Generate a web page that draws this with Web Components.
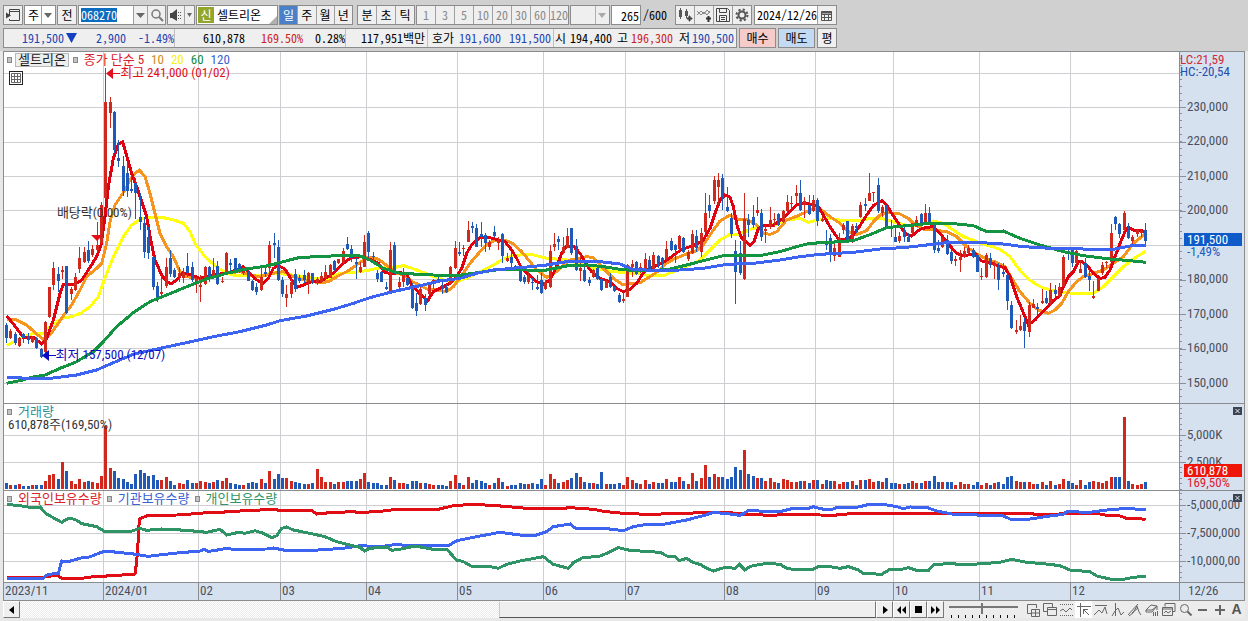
<!DOCTYPE html>
<html lang="ko">
<head>
<meta charset="utf-8">
<meta name="viewport" content="width=device-width, initial-scale=1">
<title>셀트리온 차트</title>
<style>
  html, body { margin: 0; }
  body {
    background: #e8e8e8;
    color: #000;
    font: 12px/18px "Noto Sans Mono CJK KR", "Noto Sans CJK KR", sans-serif;
    --chart-font: "Roboto Condensed", "Noto Sans Mono CJK KR", "Noto Sans CJK KR", sans-serif;
    --axis-bg: #d6e1ef;
    --axis-width: 65px;
    --line: #8a8c90;
  }
</style>
</head>
<body>
<chart-app></chart-app>

<script>
const define = (name, html, setup) => {
  const tpl = document.createElement('template');
  tpl.innerHTML = html;
  customElements.define(name, class extends HTMLElement {
    constructor() {
      super();
      this.attachShadow({ mode: 'open' }).append(tpl.content.cloneNode(true));
    }
    connectedCallback() { if (setup) setup.call(this, this.shadowRoot); }
  });
};

/* ---------- series, three units per pixel ---------- */
const FIRST = 19.5, STEP = 12.945;

/* colour, high, open/close top, open/close bottom, low */
const CANDLES = `b698,705,745,758 r716,723,745,748 b725,733,760,765 r740,745,768,770 b728,733,745,758 b730,737,750,762 r738,742,755,758 b742,745,775,777 b775,777,800,803 r692,697,785,790
r590,592,680,685 r517,535,585,600 b532,552,573,607 r527,540,546,567 b527,529,670,672 r590,598,612,630 r550,562,600,602 r472,504,537,550 r470,487,517,520 b452,480,512,520
r465,478,495,500 r395,465,480,485 r335,345,460,462 r-65,37,325,328 r22,37,68,115 b62,67,180,190 b150,205,213,230 b197,228,303,317 b220,250,302,322 b255,297,302,310
b265,280,310,388 b310,382,395,420 b380,400,485,505 b410,442,490,507 b497,500,590,600 b575,588,625,635 r555,606,611,625 r505,532,587,595 b480,505,553,560 b535,540,562,565
r530,548,560,575 r535,550,565,580 b488,528,550,560 b515,530,570,575 r560,565,575,610 r555,585,592,635 r527,530,583,585 b528,530,560,575 r505,540,560,563 b512,528,583,585
r560,573,577,580 r485,490,553,555 b508,520,526,545 b503,505,540,542 b520,523,545,550 r530,533,548,555 b543,545,572,574 b570,573,600,602 b580,590,605,615 r525,560,600,603
b525,545,551,560 r452,465,535,548 b430,460,465,503 b450,470,570,573 b560,570,612,620 r585,612,625,650 r560,575,613,625 b537,552,597,605 b555,563,573,578 b540,555,570,580
r545,550,577,613 b548,550,580,583 r560,567,577,585 r545,557,575,578 r525,545,565,568 r522,525,563,565 b510,513,540,543 r506,508,518,522 r475,483,515,522 b440,462,477,480
b465,478,505,515 b505,516,522,567 r515,530,545,550 r435,455,530,532 b422,430,485,500 b485,497,502,510 b540,550,567,575 b543,545,575,577 b575,590,597,600 r455,480,607,610
b455,465,550,552 r560,575,592,605 r535,545,575,590 b560,565,585,588 b580,585,653,656 b610,640,663,677 r585,597,643,645 b612,623,645,662 r578,583,613,616 r568,570,582,597
b558,567,573,580 b577,585,597,612 b585,592,605,608 r528,530,583,585 r453,473,533,537 b457,486,491,497 r465,473,478,497 r393,420,455,457 b397,408,415,430 b402,413,470,472
b395,432,440,470 b430,435,460,485 r450,455,472,480 b407,425,437,440 r440,450,460,480 b430,432,497,520 r490,503,512,515 b487,500,520,530 b525,528,535,540 b530,533,573,576
b555,560,575,583 r545,558,575,583 b565,575,580,600 b555,592,597,600 b548,570,608,612 r570,577,598,600 r465,482,592,595 r430,462,472,483 b437,447,455,480 r440,470,490,492
r413,437,473,475 b413,415,490,495 b447,468,540,543 r495,535,542,572 b510,540,573,575 b560,570,578,587 r537,540,562,565 b530,535,567,570 b565,568,600,602 r570,573,593,595
b550,560,590,593 b588,590,603,605 b608,615,635,638 r610,626,632,638 r522,525,620,622 r510,523,530,560 b513,515,552,555 r518,530,542,550 r490,508,543,548 b498,510,538,540
r487,495,538,542 b495,497,527,535 b500,505,520,545 r452,478,507,510 b443,452,480,482 b463,465,480,520 r435,438,478,482 b440,443,487,490 r480,485,508,512 r420,433,490,492
b420,438,475,485 r415,430,485,502 r310,370,425,428 b315,345,362,383 r258,270,333,343 r248,270,290,345 b253,265,322,360 b290,352,362,365 b370,385,432,443 b450,483,545,642
b452,488,548,555 r308,388,567,569 b372,390,405,440 b345,380,405,415 r320,360,368,378 b358,370,440,453 r405,417,423,458 r350,390,412,417 r370,386,390,410 b368,372,405,408
r360,362,395,398 r315,337,362,370 r318,338,343,357 r285,310,317,340 b270,308,360,362 r322,332,345,385 b315,345,373,375 r315,330,362,365 b325,330,393,408 r378,388,393,396
b420,459,465,480 b432,443,485,515 r455,475,497,512 r430,445,500,502 r400,405,420,433 b392,393,457,459 r403,408,453,458 b400,409,414,430 r337,345,382,384 b325,342,347,363
r248,310,332,334 r305,306,310,335 b263,285,362,368 r345,350,370,380 b345,347,413,416 b390,410,415,440 b415,440,455,457 r425,438,453,458 b405,420,440,455 b430,440,455,457
r398,400,430,433 r378,390,410,412 b370,372,405,408 r343,370,402,404 b350,370,403,406 b402,405,480,490 b450,475,482,490 r442,445,472,475 b435,450,492,494 b480,485,513,522
r497,507,512,527 r480,500,510,545 r470,483,500,505 r465,475,490,493 b475,480,500,503 b490,495,545,547 r535,557,562,570 r490,495,560,565 b488,503,525,535 r513,520,528,568
b520,530,570,600 b520,545,553,560 b550,555,632,660 b632,645,715,718 r690,720,725,733 r675,708,720,722 b685,697,722,773 r637,645,725,740 r627,643,653,655 b640,652,658,675
r597,632,640,642 b603,625,640,642 r580,600,640,645 b585,600,612,620 r580,592,618,620 r495,502,588,590 b480,485,490,510 b470,475,520,530 r477,483,520,522 r510,537,548,550
b503,520,560,563 b540,557,570,603 r573,618,624,627 r563,565,602,604 r517,525,548,555 r514,516,520,535 r403,430,515,517 b378,380,403,420 b400,403,433,445 r363,370,420,423
b398,420,445,447 r435,440,453,465 r418,420,433,440 r418,424,430,442 b398,420,453,470`.split(/\s+/)
  .map(s => [s[0], ...s.slice(1).split(',').map(Number)]);

const VOLUMES = [17,12,11,15,9,9,12,12,12,23,42,45,30,80,54,23,15,30,20,23,20,17,38,190,63,54,33,30,20,15,45,57,48,38,42,27,27,36,23,11,17,15,27,18,18,23,20,18,20,27,
23,33,18,15,12,12,17,20,18,30,18,54,30,45,33,33,24,20,17,15,15,17,60,36,20,20,15,20,20,23,23,23,30,48,20,18,18,12,12,36,27,18,18,15,23,23,18,18,15,12,
12,12,9,23,42,18,12,36,18,27,23,18,12,18,33,20,9,12,12,18,15,15,18,15,30,12,45,30,18,20,27,33,48,36,20,18,18,15,51,15,15,15,18,12,36,27,18,15,27,15,
20,17,17,30,20,20,36,23,15,48,23,33,72,36,45,36,36,30,36,66,57,117,45,39,33,33,23,33,20,17,30,27,20,20,24,24,18,27,27,15,27,23,23,15,20,20,24,12,27,27,
30,20,24,20,33,18,18,15,15,17,24,18,18,24,24,39,20,20,20,20,12,20,15,15,12,20,12,18,12,18,20,15,36,39,24,20,20,20,15,15,20,12,24,12,15,30,24,18,12,27,
12,20,24,20,17,24,36,36,36,215,23,15,12,15,20];

const MA = {
  m5: ['#e00010', '20,677 45,708 70,742 100,742 125,762 140,745 160,690 180,610 190,583 225,583 245,570 265,540 290,500 303,465 315,380 325,290 340,205 355,162 368,155 375,180 395,250 410,290 425,335 440,380 452,450 465,510 485,555 500,575 513,582 530,570 548,548 570,553 600,565 625,560 650,553 680,550 710,540 730,530 750,550 765,567 790,580 805,565 820,535 835,527 855,537 875,570 890,592 910,585 935,575 960,575 985,560 1005,545 1030,520 1050,505 1085,500 1110,508 1135,520 1155,548 1175,550 1200,548 1220,552 1235,585 1258,610 1283,632 1300,605 1325,592 1350,580 1370,560 1385,535 1400,490 1415,465 1440,443 1470,443 1495,450 1515,455 1535,480 1550,505 1565,535 1585,553 1605,572 1630,583 1650,570 1670,530 1685,490 1700,468 1720,468 1740,490 1760,525 1775,545 1800,565 1830,575 1850,595 1870,605 1890,598 1910,580 1935,540 1955,533 1990,517 2015,500 2045,478 2070,470 2090,463 2110,450 2130,415 2145,370 2160,330 2175,315 2190,322 2200,350 2212,410 2225,445 2250,465 2262,455 2275,415 2295,405 2320,405 2350,385 2370,365 2390,345 2415,338 2440,345 2455,350 2470,375 2490,410 2515,447 2535,447 2555,440 2575,415 2600,375 2620,347 2645,332 2660,345 2675,370 2695,400 2715,430 2735,438 2760,418 2780,412 2800,410 2820,430 2845,462 2870,490 2890,497 2925,492 2945,513 2975,520 3000,530 3015,533 3030,560 3050,620 3075,680 3085,705 3105,690 3130,663 3160,632 3180,617 3190,590 3205,560 3220,545 3235,515 3245,515 3260,525 3280,550 3300,565 3315,562 3330,540 3345,500 3360,460 3375,425 3385,412 3400,420 3425,420 3437,430'],
  m10: ['#f7941d', '20,688 50,690 80,705 105,728 130,748 150,735 175,700 195,670 215,645 240,600 260,560 290,535 305,520 320,460 330,395 345,345 375,300 390,270 405,250 418,240 435,260 450,310 465,370 480,430 500,470 520,500 540,545 560,560 600,565 640,560 680,548 720,545 750,555 780,560 820,550 850,545 880,560 920,572 960,578 985,575 1010,560 1040,545 1070,525 1100,503 1130,505 1155,522 1190,550 1215,555 1235,575 1260,585 1280,597 1310,600 1340,605 1360,590 1390,550 1410,520 1440,485 1465,460 1490,450 1515,450 1540,462 1565,485 1590,515 1610,540 1640,562 1670,545 1690,525 1710,510 1740,505 1760,500 1780,503 1810,535 1840,565 1870,585 1900,580 1920,578 1950,560 1980,540 1995,522 2020,508 2060,492 2085,485 2110,465 2140,420 2160,393 2190,375 2215,388 2245,390 2270,405 2290,430 2310,433 2330,425 2360,390 2395,377 2420,365 2440,357 2465,360 2490,380 2520,400 2545,425 2570,433 2600,422 2620,395 2640,375 2665,368 2700,372 2725,385 2745,405 2770,417 2800,420 2840,425 2870,440 2900,470 2930,492 2960,508 2990,517 3015,530 3035,565 3060,605 3090,640 3115,660 3145,670 3165,660 3185,640 3205,605 3230,575 3250,560 3280,550 3310,540 3340,520 3370,500 3400,460 3425,440 3437,430'],
  m20: ['#ffff10', '20,767 50,750 75,740 100,730 130,730 150,710 185,685 215,680 245,668 270,650 295,620 320,550 345,490 370,440 395,405 420,388 450,383 485,382 520,390 550,400 570,425 585,460 615,500 640,522 670,545 700,555 740,555 780,557 820,548 850,552 900,558 940,565 985,568 1020,550 1060,547 1100,542 1140,533 1170,535 1210,527 1245,538 1290,555 1330,570 1370,575 1410,560 1450,540 1480,525 1510,507 1540,497 1590,492 1640,505 1700,510 1740,520 1780,535 1830,543 1870,548 1910,550 1950,557 1990,557 2020,545 2060,530 2100,510 2130,480 2160,450 2190,433 2220,432 2250,418 2290,408 2330,403 2360,390 2400,385 2425,397 2470,385 2500,387 2535,392 2570,393 2610,385 2650,387 2680,395 2720,407 2750,405 2800,393 2830,400 2860,420 2890,440 2930,455 2960,465 3000,478 3030,500 3055,535 3085,567 3120,590 3150,600 3190,608 3230,610 3280,610 3310,590 3340,560 3370,530 3400,507 3437,483'],
  m60: ['#129440', '20,880 60,872 95,862 135,855 180,835 230,815 280,785 310,755 350,710 400,668 450,635 500,615 560,590 620,567 680,550 740,537 800,528 850,515 900,502 960,500 1010,497 1080,498 1110,510 1150,535 1200,550 1260,553 1300,555 1370,557 1440,547 1500,538 1580,540 1640,540 1700,528 1760,525 1810,530 1860,538 1910,542 1960,542 2010,537 2060,525 2110,512 2170,497 2230,497 2290,495 2340,485 2390,470 2430,460 2490,457 2560,452 2620,430 2660,413 2720,407 2790,400 2850,400 2920,407 2960,425 3010,423 3060,445 3120,465 3190,485 3250,497 3330,507 3400,513 3437,517'],
  m120: ['#3c64f0', '20,862 90,865 150,865 230,855 290,840 340,818 400,793 480,775 560,758 640,740 720,725 800,705 840,692 920,678 1000,658 1060,640 1110,623 1170,607 1260,587 1320,573 1380,565 1430,550 1480,540 1560,533 1640,525 1700,515 1800,515 1860,522 1895,537 1950,541 2040,540 2110,535 2180,523 2260,520 2340,510 2400,500 2460,493 2560,487 2640,477 2720,472 2780,465 2850,457 2930,457 3010,462 3070,470 3150,475 3220,475 3290,480 3340,478 3390,468 3437,465'],
};
const HOLD = {
  foreign: ['#e00d14', '20,548 130,547 170,540 185,550 230,552 280,545 340,542 405,537 410,500 415,430 418,372 440,363 530,360 600,355 640,351 655,354 680,350 740,347 820,343 850,348 935,347 950,357 990,353 1060,350 1080,353 1150,348 1180,344 1310,344 1360,332 1420,328 1490,332 1580,340 1690,340 1710,338 1780,343 1810,349 1880,356 1950,358 2080,354 2180,352 2240,358 2310,361 2400,357 2460,360 2500,361 2540,357 2720,356 2850,354 3080,355 3110,358 3250,356 3300,357 3320,361 3360,363 3380,370 3420,371 3437,374'],
  inst: ['#3c64f0', '20,551 125,552 145,538 175,535 185,498 205,500 250,487 265,487 315,468 400,477 445,484 520,475 600,468 613,463 625,469 660,464 680,460 700,463 800,462 820,459 860,467 940,466 1030,460 1080,452 1140,455 1190,448 1230,453 1345,452 1370,437 1430,425 1500,412 1560,420 1610,420 1640,410 1660,395 1710,387 1730,402 1820,401 1870,407 1900,395 1930,390 1990,388 2060,375 2110,362 2140,352 2190,357 2220,361 2245,347 2340,350 2380,340 2420,342 2440,335 2460,341 2490,345 2510,338 2570,337 2600,330 2650,328 2690,335 2710,341 2730,336 2780,337 2810,348 2860,358 2930,360 3010,363 3035,374 3090,372 3150,363 3190,358 3200,350 3270,352 3310,346 3370,341 3437,343'],
  retail: ['#2f9465', '20,328 60,332 90,337 120,336 140,357 185,382 205,370 225,373 245,386 290,395 315,410 390,410 420,400 440,406 485,402 560,406 620,412 660,403 680,420 715,412 735,415 765,407 790,415 815,428 830,422 845,400 860,396 880,405 930,415 975,425 1010,440 1060,453 1080,457 1093,468 1110,460 1160,456 1175,466 1210,461 1245,453 1300,463 1340,463 1370,495 1390,500 1415,514 1470,515 1495,520 1520,508 1560,498 1630,485 1660,508 1705,520 1720,503 1750,487 1795,485 1820,475 1855,458 1890,466 1980,472 2005,485 2025,485 2037,497 2060,490 2080,503 2100,508 2120,520 2140,528 2175,517 2205,520 2218,508 2235,525 2250,514 2300,505 2340,508 2360,520 2390,525 2440,523 2455,514 2490,515 2520,520 2545,515 2575,525 2590,535 2645,538 2670,523 2700,524 2725,518 2750,526 2785,527 2800,510 2850,505 2890,510 2960,505 3000,502 3035,493 3080,502 3130,506 3180,512 3210,525 3270,530 3290,543 3330,552 3370,553 3400,547 3437,544'],
};
const MONTH_X = [310, 595, 841, 1099, 1372, 1630, 1876, 2173, 2446, 2680, 2938, 3211];

const line = ([color, pts]) => `<polyline points="${pts}" stroke="${color}" stroke-width="3" fill="none" vector-effect="non-scaling-stroke"/>`;
const barPath = (kind, from, to) => CANDLES.map((c, i) => c[0] === kind ? `M${(FIRST + STEP * i).toFixed(1)} ${c[from]}V${c[to]}` : '').join('');
const stroke = (d, color, w) => `<path d="${d}" stroke="${color}" stroke-width="${w}" fill="none" vector-effect="non-scaling-stroke"/>`;
const grid = (ys, top, bottom) => stroke(MONTH_X.map(x => `M${x} ${top}V${bottom}`).join('') + ys.map(y => `M12 ${y}H3537`).join(''), '#cfcfd3', 1);

const DRAW = {
  price() {
    return grid([-50, 52, 157, 260, 362, 466, 569, 673, 776, 880], -114, 939)
      + line(MA.m20) + line(MA.m10) + line(MA.m5)
      + stroke(barPath('r', 1, 4), '#d0281c', 1) + stroke(barPath('b', 1, 4), '#1f5ab8', 1)
      + stroke(barPath('r', 2, 3), '#d0281c', 3) + stroke(barPath('b', 2, 3), '#1f5ab8', 3)
      + line(MA.m60) + line(MA.m120);
  },
  volume() {
    const d = kind => CANDLES.map((c, i) => c[0] === kind ? `M${(FIRST + STEP * i).toFixed(1)} 282v${-VOLUMES[i]}` : '').join('');
    return grid([121, 202], 27, 285) + stroke(d('r'), '#d0281c', 3) + stroke(d('b'), '#1f5ab8', 3);
  },
  holdings() {
    return grid([331, 415, 499], 288, 561) + line(HOLD.foreign) + line(HOLD.inst) + line(HOLD.retail);
  },
};

/* ---------- stretchable plot with notes laid over it ---------- */
define('series-plot', `
<style>
  :host { display: block; position: relative; min-width: 0; background: #fff; overflow: hidden; font: 13px/14px var(--chart-font); }
  svg { display: block; width: 100%; shape-rendering: crispEdges; }
  ::slotted(*) { position: absolute; white-space: nowrap; }
</style>
<svg preserveAspectRatio="none" aria-hidden="true"></svg><slot></slot>`, function (root) {
  const svg = root.querySelector('svg');
  const [top, height] = this.getAttribute('span').split(' ').map(Number);
  svg.setAttribute('viewBox', `12 ${top} 3525 ${height}`);
  svg.style.height = height / 3 + 'px';
  svg.innerHTML = DRAW[this.getAttribute('kind')]();
});

/* ---------- value axis ---------- */
define('value-axis', `
<style>
  :host { display: block; position: relative; background: var(--axis-bg); border-left: 1px solid var(--line); }
  svg { display: block; width: 64px; height: 100%; font: 13px var(--chart-font); fill: #4a4f5c; }
  path { stroke: #8a8f99; shape-rendering: crispEdges; fill: none; }
  button { position: absolute; top: 3px; right: 2px; width: 9px; height: 8px; padding: 0; border: 0; background: #3c4452; }
  button svg { width: 9px; height: 8px; }
  button path { stroke: #e8eef6; shape-rendering: auto; }
</style>
<svg class="scale"></svg>`, function (root) {
  const svg = root.querySelector('svg');
  const [h, first, gap, minor] = this.getAttribute('scale').split(' ').map(Number);
  const labels = JSON.parse(this.getAttribute('labels'));
  svg.style.height = h + 'px';
  let d = '';
  for (let y = first % minor; y < h; y += minor) d += `M0 ${y.toFixed(1)}h2`;
  labels.forEach((t, i) => { d += `M0 ${Math.round(first + gap * i)}h6`; });
  let out = `<path d="${d}"/>`;
  labels.forEach((t, i) => { out += `<text x="7" y="${Math.floor(first + gap * i) + 4}">${t}</text>`; });
  const kind = this.getAttribute('kind');
  if (kind === 'price') out += `<g><text x="0" y="12" fill="#d42a35">LC:21,59</text><text x="0" y="24" fill="#1f4fae">HC:-20,54</text>
    <rect x="4" y="181" width="58" height="13" fill="#0d5ac8"/><text x="7" y="192" fill="#fff">191,500</text><text x="7" y="204" fill="#1a5cc0">-1,49%</text></g>`;
  if (kind === 'volume') out += `<rect x="4" y="60" width="58" height="13" fill="#ee1608"/><text x="7" y="71" fill="#fff">610,878</text><text x="7" y="83" fill="#e02030">169,50%</text>`;
  svg.innerHTML = out;
  if (this.hasAttribute('closable')) {
    const b = document.createElement('button');
    b.setAttribute('aria-label', '지표 닫기');
    b.innerHTML = '<svg viewBox="0 0 9 8"><path d="M2.5 2l4 4M6.5 2l-4 4"/></svg>';
    root.append(b);
  }
});

/* ---------- legend row and note ---------- */
define('legend-row', `
<style>
  :host { display: flex; align-items: center; height: 14px; left: 3px; }
  ::slotted(i) { width: 3px; height: 4px; border: 1px solid #888; background: #c4c4c4; flex: none; }
</style><slot></slot>`);

define('price-note', `
<style>
  :host { display: flex; align-items: center; height: 14px; }
  svg { display: block; flex: none; }
</style>
<svg width="14" height="11"><path d="M0 5.5L7 0v11zM7 5h7v1H7z" fill="currentColor"/></svg><slot></slot>`);

/* ---------- month strip ---------- */
define('month-axis', `
<style>
  :host { display: grid; grid-template-columns: 1fr var(--axis-width); height: 17px; background: var(--axis-bg); border-top: 1px solid var(--line); border-bottom: 1px solid var(--line); font: 13px/16px var(--chart-font); color: #4a4f5c; }
  ol { display: grid; grid-template-columns: 99fr 95fr 82fr 86fr 91fr 86fr 82fr 99fr 91fr 78fr 86fr 91fr 109fr; margin: 0; padding: 0; list-style: none; min-width: 0; }
  li { border-left: 1px solid var(--line); box-sizing: border-box; padding-left: 1px; white-space: nowrap; overflow: hidden; }
  li:first-child { border-left: 0; }
  time { border-left: 1px solid var(--line); padding-left: 8px; }
</style>
<ol><li>2023/11</li><li>2024/01</li><li>02</li><li>03</li><li>04</li><li>05</li><li>06</li><li>07</li><li>08</li><li>09</li><li>10</li><li>11</li><li>12</li></ol>
<time datetime="2024-12-26">12/26</time>`);

/* ---------- toolbar ---------- */
define('chart-toolbar', `
<style>
  :host { display: flex; flex-wrap: wrap; gap: 1px; }
  * { box-sizing: border-box; }
  button, input, select { font: inherit; color: inherit; margin: 0; padding: 0; border: 0; border-radius: 0; background: none; height: 18px; min-width: 0; }
  button { display: flex; flex: 1; align-items: center; justify-content: center; background: #efefef; line-height: 18px; }
  button.fix { flex: none; }
  .g { display: flex; width: 20px; height: 20px; border: 1px solid #8c8c8c; background: #fff; }
  .g > * + * { border-left: 1px solid #a0a0a0; }
  .on { background: #4a80c8; color: #fff; }
  .off { color: #8a8a8a; }
  .off, .off button { background: #efefef; }
  .pick { position: relative; width: 32px; }
  .pick select { appearance: none; width: 30px; padding-left: 3px; }
  .pick svg { position: absolute; right: 0; top: 0; border: 0; pointer-events: none; }
  .pick.off { width: 40px; }
  .pick.off select { width: 38px; }
  .code { width: 88px; }
  .code input { flex: 1; padding-left: 2px; color: #fff; background: linear-gradient(#0b6cc0, #0b6cc0) 2px 2px / 36px 14px no-repeat; }
  .sound { width: 28px; }
  .name { width: 82px; position: relative; align-items: center; }
  .name b { font-weight: 400; width: 16px; height: 16px; line-height: 15px; text-align: center; background: #93a62c; color: #fff; margin-left: 1px; }
  .name span { border: 0; margin-left: 3px; }
  .name svg { position: absolute; right: 0; bottom: 0; border: 0; }
  .days { width: 74px; }
  .ticks { width: 58px; margin-left: 3px; }
  .nums { width: 153px; }
  .count { display: flex; align-items: center; width: 63px; }
  .count input { width: 30px; height: 20px; border: 1px solid #8c8c8c; background: #fff; text-align: right; padding-right: 1px; }
  .count span { margin-left: 2px; }
  .tools { width: 77px; margin-right: 1px; }
  .date { width: 83px; }
  .date input { flex: 1; padding-left: 2px; }
  svg { display: block; flex: none; }
</style>
<div class="g"><button aria-label="패널 열기"><svg width="16" height="14" fill="none" stroke="#444"><path d="M4.500 7V1.500h10v11h-10V11M4 3.500h10"/><path d="M1 4.500L6 7.500 1 10.500z" fill="#444" stroke="none"/></svg></button></div>
<div class="g pick"><select aria-label="시장"><option>주</option></select><svg width="14" height="18"><path d="M.5 0v18" stroke="#a0a0a0"/><path d="M3 7h8L7 12z" fill="#666"/></svg></div>
<div class="g"><button>전</button></div>
<div class="g code"><input aria-label="종목코드" value="068270"><button class="fix" aria-label="최근 종목" style="width:14px"><svg width="9" height="5"><path d="M0 0h9L4.500 5z" fill="#666"/></svg></button><button class="fix" aria-label="종목 검색" style="width:18px"><svg width="14" height="14" fill="none" stroke="#777"><circle cx="6" cy="6" r="4" stroke-width="1.500"/><path d="M9 9l4 4" stroke-width="2"/></svg></button></div>
<div class="g sound"><button aria-label="소리"><svg width="14" height="13"><path d="M1 4h2l5-4v12L3 9H1z" fill="#444"/><path d="M9 3h1v1H9zM11 3h1v1h-1zM9 6h1v1H9zM11 6h1v1h-1zM9 9h1v1H9zM11 9h1v1h-1z" fill="#555"/></svg></button><button class="fix" aria-label="소리 메뉴" style="width:10px"><svg width="5" height="4"><path d="M0 0h5L2.500 4z" fill="#666"/></svg></button></div>
<div class="g name"><b>신</b><span>셀트리온</span><svg width="8" height="8"><path d="M8 0v8H0z" fill="#b0b0b0"/></svg></div>
<div class="g days"><button class="on" aria-pressed="true">일</button><button>주</button><button>월</button><button>년</button></div>
<div class="g ticks"><button>분</button><button>초</button><button>틱</button></div>
<div class="g off nums"><button>1</button><button>3</button><button>5</button><button>10</button><button>20</button><button>30</button><button>60</button><button>120</button></div>
<div class="g off pick"><select aria-label="주기" disabled><option></option></select><svg width="14" height="18"><path d="M.5 0v18" stroke="#b0b0b0"/><path d="M3 7h8L7 12z" fill="#aaa"/></svg></div>
<div class="count"><input aria-label="표시 봉수" value="265"><span>/600</span></div>
<div class="g tools"><button aria-label="봉 종류"><svg width="16" height="14"><path d="M2 2h3v7H2zM3 0h1v11H3zM8 3h3v5H8zM9 1h1v9H9z" fill="#555"/><path d="M12 8h1v2h2v1h-2v2h-1v-2h-2v-1h2z" fill="#444" stroke="#444"/></svg></button><button aria-label="지표 추가"><svg width="16" height="14" fill="none" stroke="#888"><path d="M1 7l4-4 3 3 3-4 3 3M1 3l4 4 3-3 3 3 3-4"/><path d="M12.500 8v6M10 10.500h5" stroke="#333" stroke-width="2"/></svg></button><button aria-label="저장"><svg width="14" height="14" fill="none" stroke="#444"><path d="M.5.5h11l2 2v11H.5zM3.500.5v4h7v-4M3.500 13.500v-6h7v6M5 9.500h4M5 11.500h4"/></svg></button><button aria-label="설정"><svg width="14" height="14" fill="none" stroke="#555"><circle cx="7" cy="7" r="3.500" stroke-width="2"/><circle cx="7" cy="7" r="5.500" stroke-width="2" stroke-dasharray="2.200 2.120"/></svg></button></div>
<div class="g date"><input aria-label="기준일" value="2024/12/26"><button class="fix" aria-label="달력" style="width:19px"><svg width="12" height="11" fill="none" stroke="#555"><path d="M.5 1.500h10v9H.5zM.5 4.500h10M3.500 4v6M7.500 4v6M1 7.500h9"/><path d="M0 2.500h11" stroke-width="2"/></svg></button></div>`);

/* ---------- quote strip ---------- */
define('quote-strip', `
<style>
  :host { display: flex; flex-wrap: wrap; gap: 2px; }
  * { box-sizing: border-box; }
  dl { display: flex; flex-wrap: wrap; margin: 0; border: 1px solid #8c8c8c; background: #efefef; }
  div { display: grid; text-align: right; line-height: 18px; height: 18px; border-right: 1px solid #c0c0c0; white-space: nowrap; }
  div:last-child { border-right: 0; }
  dd, dt { margin: 0; }
  .b { color: #1f45b0; } .r { color: #cc2222; } .k { color: #000; }
  svg { display: block; margin: 4px auto 0; }
  button { font: inherit; width: 37px; height: 20px; line-height: 18px; padding: 0; border: 1px solid #8c8c8c; background: #efefef; color: #000; }
  .buy { background: #f6cccb; } .sell { background: #c2daf4; } .avg { width: 20px; }
</style>
<dl>
  <div style="grid-template-columns:60px 15px 47px 48px" class="b"><dd>191,500</dd><dd><svg width="11" height="10"><path d="M0 0h11L5.500 10z" fill="#1440c0"/></svg></dd><dd>2,900</dd><dd>-1.49%</dd></div>
  <div style="grid-template-columns:70px 58px 42px"><dd>610,878</dd><dd class="r">169.50%</dd><dd>0.28%</dd></div>
  <div style="grid-template-columns:79px 2px"><dd>117,951백만</dd></div>
  <div style="grid-template-columns:26px 47px 50px 2px" class="b"><dt class="k">호가</dt><dd>191,600</dd><dd>191,500</dd></div>
  <div style="grid-template-columns:12px 46px 16px 45px 17px 44px 2px"><dt>시</dt><dd>194,400</dd><dt>고</dt><dd class="r">196,300</dd><dt>저</dt><dd class="b">190,500</dd></div>
</dl>
<button class="buy">매수</button><button class="sell">매도</button><button class="avg">평</button>`);

/* ---------- bottom strip: scroll bar, playback, zoom, drawing tools ---------- */
define('scroll-strip', `
<style>
  :host { display: flex; height: 17px; background: #ececec; }
  * { box-sizing: border-box; }
  button { display: flex; align-items: center; justify-content: center; flex: none; width: 17px; height: 17px; padding: 0; border: 1px solid; border-color: #fff #777 #777 #fff; background: #efefef; color: #555; }
  .track { flex: 1; display: grid; grid-template-columns: 479fr 377fr; min-width: 40px; background: repeating-conic-gradient(#fff 0 25%, #ececec 0 50%) 0 0 / 2px 2px; }
  .track i { grid-column: 2; border: 1px solid; border-color: #fff #777 #555 #ccc; background: #efefef; }
  input { appearance: none; flex: none; width: 69px; height: 18px; margin: 0 6px 0 5px; background: linear-gradient(#777, #777) 0 5px / 100% 2px no-repeat, repeating-linear-gradient(90deg, #111 0 1px, transparent 1px 7px) 2px 14px / 100% 3px no-repeat; }
  input::-webkit-slider-thumb { appearance: none; width: 2px; height: 11px; background: #777; margin-bottom: 4px; }
  .t { border: 0; background: none; }
  .act { background: #fff; }
  svg { display: block; flex: none; fill: none; stroke: #666; }
  .k { fill: #000; stroke: none; }
  .letter { font: 700 14px/17px "Liberation Sans", sans-serif; }
</style>
<button aria-label="왼쪽"><svg class="k" width="6" height="8"><path d="M5 0v8L0 4z"/></svg></button>
<div class="track"><i></i></div>
<button aria-label="재생"><svg class="k" width="6" height="8"><path d="M1 0v8l5-4z"/></svg></button>
<button aria-label="뒤로"><svg class="k" width="9" height="8"><path d="M4 0v8L0 4zM9 0v8L5 4z"/></svg></button>
<button aria-label="정지"><svg class="k" width="7" height="7"><path d="M0 0h7v7H0z"/></svg></button>
<button aria-label="앞으로"><svg class="k" width="9" height="8"><path d="M0 0v8l4-4zM5 0v8l4-4z"/></svg></button>
<input type="range" aria-label="확대 비율" value="48">
<button class="t" aria-label="창 추가"><svg width="14" height="14"><path d="M6 10.500H1.500v-9h9V5M5.500 6.500h8v7h-8zM9.500 6v7M6 10h8"/></svg></button>
<button class="t" aria-label="창 복사"><svg width="14" height="14"><path d="M4 8.500H.5v-8h9V4M4.500 4.500h9v8h-9zM5 6.500h8"/></svg></button>
<button class="t" aria-label="보조선"><svg width="14" height="14" stroke-dasharray="1 1"><path d="M0 1.500h14M0 12.500h14"/><path d="M0 8l3-2 3 3 4-4 2 2" stroke-dasharray="none"/></svg></button>
<button class="t act" aria-label="십자선"><svg width="14" height="14"><path d="M3.500 0v14M0 3.500h14M6 6l6 6M6.500 11V6.500H11"/></svg></button>
<button class="t" aria-label="수평선"><svg width="14" height="14" stroke="#888"><path d="M1 2.500h12M0 12l5-5 3 3 3-6 2 7"/></svg></button>
<button class="t" aria-label="수직선"><svg width="14" height="14"><path d="M4.500 0v13M1 13l3-5 3-3 3 7 3-3"/></svg></button>
<button class="t" aria-label="추세선"><svg width="14" height="14"><path d="M0 12L10 1M1 13l4-3 4-7 2 6 2 3M4 10l6-5"/></svg></button>
<button class="t" aria-label="지우개"><svg width="14" height="14"><path d="M1 7l5-5 6 1-5 6H1zM1 7h6l5-4v4M8.500 9v4M10.500 9v4M12.500 8v5"/></svg></button>
<button class="t" aria-label="차트 복사"><svg width="14" height="14"><path d="M3 3.500V.5h10v8h-2M.5 4.500h10v8H.5zM1 6h9M2 10l2-2 2 2 3-2"/></svg></button>
<button class="t" aria-label="돋보기"><svg width="14" height="14"><circle cx="5.500" cy="5.500" r="4"/><path d="M8.500 8.500l4 4" stroke-width="2"/></svg></button>
<button class="t" aria-label="축소"><svg width="12" height="12"><path d="M1 6h9" stroke-width="2"/></svg></button>
<button class="t" aria-label="확대"><svg width="12" height="12"><path d="M1 6h10M6 1v10" stroke-width="2"/></svg></button>
<button class="t letter">A</button>`);

/* ---------- page ---------- */
define('chart-app', `
<style>
  :host { display: block; }
  header { display: flex; flex-direction: column; gap: 3px; padding: 5px 3px 3px; background: #d0d0d0; }
  main { margin: 0 3px; border-left: 1px solid var(--line); border-top: 1px solid var(--line); border-right: 1px solid var(--line); }
  section { display: grid; grid-template-columns: minmax(0, 1fr) var(--axis-width); }
  section + section { border-top: 1px solid var(--line); }
  scroll-strip { margin: 0 3px; }
  .name { border: 1px solid #b8b8b8; background: #eee; color: #222; padding: 0 2px; margin: 0 4px 0 3px; line-height: 12px; }
  .grid-icon { top: 19px; left: 5px; width: 14px; height: 14px; padding: 0; border: 1px solid #222; background: #fff; }
  .grid-icon svg { display: block; }
  .c5 { color: #d8222c; margin-left: 6px; }
  .c10 { color: #d08a20; margin-left: 7px; }
  .c20 { color: #f4f020; margin-left: 7px; }
  .c60 { color: #128a40; margin-left: 7px; }
  .c120 { color: #3a62d0; margin-left: 7px; }
  .h1, .h2 { margin: 0 5px 0 6px; }
  .h1 { color: #d8222c; }
  .h2 { color: #3a62d0; }
  .h3 { color: #2f9465; margin-left: 6px; }
  .vol { color: #2c8f96; margin-left: 6px; }
</style>
<header><chart-toolbar></chart-toolbar><quote-strip></quote-strip></header>
<main>
  <section>
    <series-plot kind="price" span="-114 1053">
      <legend-row style="top:1px"><i></i><span class="name">셀트리온</span><i></i><span class="c5">종가 단순 5</span><span class="c10">10</span><span class="c20">20</span><span class="c60">60</span><span class="c120">120</span></legend-row>
      <button class="grid-icon" aria-label="데이터 표"><svg width="12" height="12" fill="none" stroke="#666"><path d="M1.500 1.500h9v9h-9zM1 4.500h10M1 7.500h10M4.500 1v10M7.500 1v10"/></svg></button>
      <price-note style="left:8.700%;top:14px;color:#e0101c">최고 241,000 (01/02)</price-note>
      <span style="left:4.500%;top:154px;color:#333">배당락(0.00%)</span>
      <svg width="12" height="7" style="left:7.400%;top:183px"><path d="M0 0h12L6 6z" fill="#e01018"/></svg>
      <price-note style="left:3.200%;top:296px;color:#0a0ac0">최저 157,500 (12/07)</price-note>
    </series-plot>
    <value-axis kind="price" scale="351 55 34.500 6.900" labels='["230,000","220,000","210,000","200,000","","180,000","170,000","160,000","150,000"]'></value-axis>
  </section>
  <section>
    <series-plot kind="volume" span="27 258">
      <legend-row style="top:1px"><i></i><span class="vol">거래량</span></legend-row>
      <span style="left:4px;top:14px;color:#333">610,878주(169,50%)</span>
    </series-plot>
    <value-axis kind="volume" scale="86 31 27 5.400" labels='["5,000K","2,500K"]' closable></value-axis>
  </section>
  <section>
    <series-plot kind="holdings" span="288 273">
      <legend-row style="top:1px"><i></i><span class="h1">외국인보유수량</span><i></i><span class="h2">기관보유수량</span><i></i><span class="h3">개인보유수량</span></legend-row>
    </series-plot>
    <value-axis kind="holdings" scale="91 14 28 5.600" labels='["-5,000,000","-7,500,000","-10,000,00"]' closable></value-axis>
  </section>
  <month-axis></month-axis>
</main>
<scroll-strip></scroll-strip>`);
</script>
</body>
</html>
